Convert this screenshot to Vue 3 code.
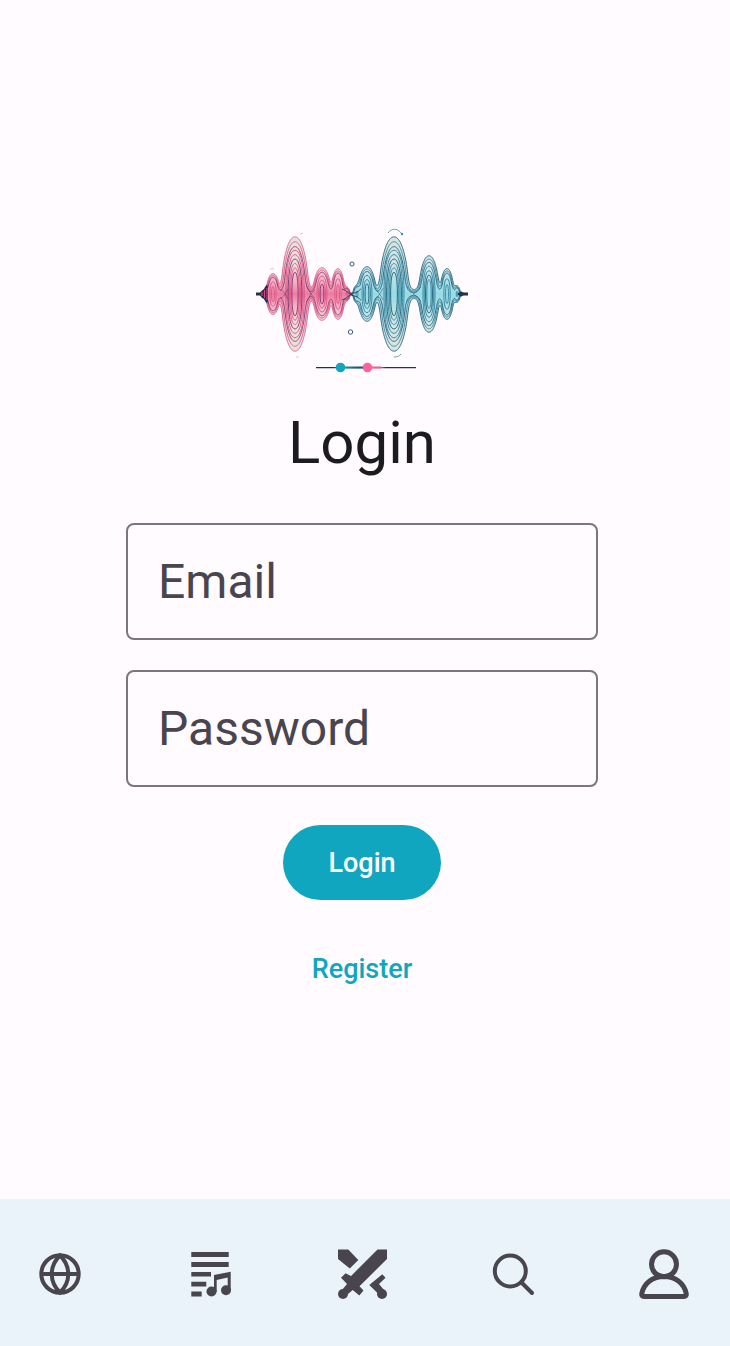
<script setup>
import { ref } from 'vue'

const email = ref('')
const password = ref('')

const MID = 101

// Each lobe: centre x, half width, half height, number of inner rings
const pinkLobes = [
  { x: 17, w: 6, h: 20, rings: 2 },
  { x: 39, w: 13, h: 57, rings: 6 },
  { x: 66, w: 8, h: 26, rings: 3 },
  { x: 82, w: 6, h: 25, rings: 2 },
  { x: 91, w: 3, h: 6, rings: 1 }
]
const tealLobes = [
  { x: 101, w: 4, h: 8, rings: 1 },
  { x: 111, w: 8, h: 27, rings: 3 },
  { x: 138, w: 14, h: 57, rings: 6 },
  { x: 173, w: 9, h: 38, rings: 4 },
  { x: 191, w: 6, h: 25, rings: 2 },
  { x: 201, w: 3, h: 7, rings: 1 }
]

function envelope(x, lobes, level, start, end) {
  const edge = Math.min(1, Math.max(0, Math.min(x - start, end - x) / 8))
  let sum = Math.pow((4 - level * 1.2) * edge, 2)
  for (const l of lobes) {
    const w = l.w * (1 - level * 0.1)
    const h = l.h * (1 - level * 0.085)
    const dx = Math.abs(x - l.x)
    const d = dx / w
    const body = d < 1 ? h * Math.pow(1 - Math.pow(d, 2.1), 0.55) : 0
    const flare = Math.min(h * 0.45, 18 - level * 2) * Math.exp(-Math.max(0, dx - w) / 2.4) * edge
    sum += Math.pow(body, 2) + Math.pow(flare, 2) * Math.min(1, d * d)
  }
  return Math.sqrt(sum)
}

function outline(lobes, level, start, end) {
  const top = []
  const bottom = []
  for (let x = start; x <= end; x += 0.25) {
    const y = envelope(x, lobes, level, start, end)
    top.push(`${x.toFixed(2)} ${(MID - y).toFixed(2)}`)
    bottom.unshift(`${x.toFixed(2)} ${(MID + y).toFixed(2)}`)
  }
  return `M${top.join('L')}L${bottom.join('L')}Z`
}

function rings(lobes) {
  const out = []
  for (const l of lobes) {
    for (let i = 1; i <= l.rings; i++) {
      const t = 0.25 + (0.75 * i) / l.rings
      const w = l.w * (1 - t * 0.76)
      const h = l.h * (1 - t * 0.62)
      out.push({
        dark: i % 3 === 0,
        d: `M${l.x - w} ${MID}C${l.x - w} ${MID - h * 0.6} ${l.x - w * 0.65} ${MID - h} ${l.x} ${MID - h}S${l.x + w} ${MID - h * 0.6} ${l.x + w} ${MID}S${l.x + w * 0.65} ${MID + h} ${l.x} ${MID + h}S${l.x - w} ${MID + h * 0.6} ${l.x - w} ${MID}Z`
      })
    }
  }
  return out
}

const waves = [
  {
    name: 'pink',
    fill: outline(pinkLobes, 0, 3, 97),
    lines: [0, 1, 2].map((n) => ({ dark: n === 2, d: outline(pinkLobes, n, 3, 97) })),
    rings: rings(pinkLobes)
  },
  {
    name: 'teal',
    fill: outline(tealLobes, 0, 94, 209),
    lines: [0, 1, 2].map((n) => ({ dark: n !== 1, d: outline(tealLobes, n, 94, 209) })),
    rings: rings(tealLobes)
  }
]
</script>

<template>
  <div class="screen">
    <main class="content">
      <svg class="logo" viewBox="0 0 212 212" role="img" aria-label="Sound wave logo">
        <defs>
          <linearGradient id="pinkFill" x1="0" y1="43" x2="0" y2="159" gradientUnits="userSpaceOnUse">
            <stop offset="0" stop-color="#e6e2dd" />
            <stop offset="0.25" stop-color="#eedcde" />
            <stop offset="0.4" stop-color="#f6aec5" />
            <stop offset="0.5" stop-color="#ee7ba2" />
            <stop offset="0.6" stop-color="#f6aec5" />
            <stop offset="0.75" stop-color="#eedcde" />
            <stop offset="1" stop-color="#e6e2dd" />
          </linearGradient>
          <linearGradient id="tealFill" x1="0" y1="43" x2="0" y2="159" gradientUnits="userSpaceOnUse">
            <stop offset="0" stop-color="#d8e4e0" />
            <stop offset="0.28" stop-color="#cde4e5" />
            <stop offset="0.5" stop-color="#98dbe5" />
            <stop offset="0.72" stop-color="#cde4e5" />
            <stop offset="1" stop-color="#d8e4e0" />
          </linearGradient>
          <linearGradient id="slider" x1="60" y1="0" x2="160" y2="0" gradientUnits="userSpaceOnUse">
            <stop offset="0" stop-color="#193252" />
            <stop offset="0.17" stop-color="#193252" />
            <stop offset="0.25" stop-color="#12a5bd" />
            <stop offset="0.4" stop-color="#17627c" />
            <stop offset="0.48" stop-color="#174e68" />
            <stop offset="0.54" stop-color="#ff5f99" />
            <stop offset="0.64" stop-color="#e65c8e" />
            <stop offset="0.7" stop-color="#302c4d" />
            <stop offset="1" stop-color="#302c4d" />
          </linearGradient>
        </defs>
        <g v-for="wave in waves" :key="wave.name" :class="wave.name">
          <path class="body" :d="wave.fill" />
          <path v-for="(line, i) in wave.lines" :key="'l' + i" class="line" :class="{ dark: line.dark }" :d="line.d" />
          <path v-for="(ring, i) in wave.rings" :key="'r' + i" class="line" :class="{ dark: ring.dark }" :d="ring.d" />
        </g>
        <path class="tip" d="M0 99.500H4L6 97.500L8 96L9 94L11 91.500L12 94V108L11 110.500L9 108L8 106L6 105L4 102.500H0Z" />
        <path class="tip-line" d="M6 99v4M8.500 97v8M11 95v12" />
        <path class="tip" d="M202 100L205 98.500L207 99.500H212V102.500H207L205 103.500L202 102Z" />
        <path class="knot" d="M86 96C91 97 93 102 98 103S103 106 105 107M86 107C91 106 93 101 98 100S103 97 105 96" />
        <path class="knot faint" d="M24 97c4 0 6 6 8 9M24 105c4 0 6-6 8-9M50 93c3 3 4 9 9 12M50 109c3-3 4-9 9-12M119 95c4 6 6 7 8 12M119 107c4-5 6-7 8-12M151 93c4 6 7 8 14 15M151 109c4-6 7-8 14-15" />
        <circle class="dot" cx="96" cy="71" r="2" />
        <circle class="dot" cx="94.500" cy="139" r="2.200" />
        <path class="spark teal-spark" d="M132 40c4-5 9-5 13 0M138 164c4 0 5-1 7-3" />
        <circle class="spark-dot" cx="146" cy="41" r="1.200" />
        <path class="spark pink-spark" d="M44 41l3-1M40 164h3M14 77c1-2 3-2 4-1" />
        <path d="M60 174h100v1.300H60Z" fill="url(#slider)" />
        <path d="M82 173.500h43v2H82Z" fill="url(#slider)" />
        <circle cx="84.500" cy="174.500" r="4.800" fill="#12a5bd" />
        <circle cx="111.500" cy="174.500" r="4.800" fill="#ff639d" />
      </svg>

      <h1 class="title">Login</h1>

      <form class="form" @submit.prevent>
        <input v-model="email" class="field" type="email" placeholder="Email" aria-label="Email" />
        <input v-model="password" class="field" type="password" placeholder="Password" aria-label="Password" />
        <button class="button primary" type="submit">Login</button>
        <button class="button text" type="button">Register</button>
      </form>
    </main>

    <nav class="nav">
      <a class="nav-item" href="#discover" aria-label="Discover">
        <svg class="icon" viewBox="0 0 50 50">
          <g class="stroke" stroke-width="4">
            <circle cx="25" cy="25" r="18.700" />
            <path d="M25 6.500C14 17 14 33 25 43.500C36 33 36 17 25 6.500ZM6 25H44" />
          </g>
        </svg>
      </a>
      <a class="nav-item" href="#playlists" aria-label="Playlists">
        <svg class="icon" viewBox="0 0 50 50">
          <path d="M5.300 3H42.700V8H5.300ZM5.300 13H42.700V18H5.300ZM5.300 23H25V27.500H5.300ZM5.300 32.800H20.300V37.500H5.300ZM5.300 42.500H15.700V47.500H5.300Z" />
          <path d="M28 26L44.700 22.700V41.500H41.700V28.500L30.700 31V43H28Z" />
          <circle cx="25.500" cy="42.500" r="5" />
          <circle cx="40" cy="41.300" r="5" />
        </svg>
      </a>
      <a class="nav-item" href="#battle" aria-label="Battle">
        <svg class="icon" viewBox="0 0 50 50">
          <path d="M1 .5H11.300L21.300 11L12.800 19.500L1 10Z" />
          <path d="M40.500 .5H50V10L22.500 37.300L26.500 41.500L22.300 46.500L15.700 41L11 45L5 41L10 35L4 28.700L8.500 24.300L14 27Z" />
          <path d="M45.300 25.300L48.500 28.700L42 35L47 41L41.500 45L32.300 36Z" />
          <circle cx="6" cy="45" r="5" />
          <circle cx="45" cy="45" r="5" />
        </svg>
      </a>
      <a class="nav-item" href="#search" aria-label="Search">
        <svg class="icon" viewBox="0 0 50 50">
          <g class="stroke" stroke-width="4" stroke-linecap="round">
            <circle cx="22.300" cy="22" r="15.500" />
            <path d="M33.500 33.500L44 44" />
          </g>
        </svg>
      </a>
      <a class="nav-item" href="#profile" aria-label="Profile">
        <svg class="icon" viewBox="0 0 50 50">
          <g class="stroke" stroke-width="5">
            <circle cx="25" cy="15.300" r="12.500" />
            <path d="M2.800 44.500C5 34 14 27.500 25 27.500S45 34 47.200 44.500Q47.600 47.500 45 47.500H5Q2.400 47.500 2.800 44.500Z" />
          </g>
        </svg>
      </a>
    </nav>
  </div>
</template>

<style>
body {
  background: #fffbff;
}
</style>

<style scoped>
.screen {
  display: flex;
  flex-direction: column;
  min-height: 100vh;
  background: #fffbff;
  color: #1c1b1f;
  font-family: Roboto, "Liberation Sans", sans-serif;
}

.content {
  flex: 1;
  display: flex;
  flex-direction: column;
  align-items: center;
  justify-content: center;
  padding: 0 30px 0 24px;
}

.logo {
  width: 212px;
  height: 212px;
}

.pink .body { fill: url(#pinkFill); }
.teal .body { fill: url(#tealFill); }
.line { fill: none; stroke-width: 0.9; }
.pink .line { stroke: #dc5683; }
.pink .line.dark { stroke: #7c3468; }
.teal .line { stroke: #2f839d; }
.teal .line.dark { stroke: #1b5676; }
.tip { fill: #23304f; }
.tip-line { stroke: #d94b7e; stroke-width: 1; }
.knot { fill: none; stroke: #263457; stroke-width: 0.9; }
.knot.faint { stroke-width: 0.7; opacity: 0.6; }
.dot { fill: none; stroke: #36587c; stroke-width: 1; }
.spark { fill: none; stroke-width: 0.9; }
.teal-spark { stroke: #5c98a8; }
.pink-spark { stroke: #f4b6c6; }
.spark-dot { fill: #2f91ab; }

.title {
  margin: 0 0 43px;
  font-size: 60px;
  line-height: 75px;
  font-weight: 400;
}

.form {
  display: flex;
  flex-direction: column;
  align-items: center;
  width: 100%;
  max-width: 472px;
}

.field {
  box-sizing: border-box;
  width: 100%;
  height: 117px;
  margin: 0 0 30px;
  padding: 0 30px;
  border: 2px solid #7b757f;
  border-radius: 8px;
  background: transparent;
  color: #1c1b1f;
  font-family: inherit;
  font-size: 48px;
}

.field::placeholder {
  color: #49454f;
  opacity: 1;
}

.button {
  height: 75px;
  padding: 0 45px;
  border: 0;
  border-radius: 38px;
  font-family: inherit;
  font-size: 27px;
  font-weight: 500;
  cursor: pointer;
}

.primary {
  margin: 8px 0 31px;
  background: #10a6c0;
  color: #ffffff;
}

.text {
  background: transparent;
  color: #10a6c0;
}

.nav {
  display: flex;
  justify-content: space-between;
  padding: 50px 41px 47px 35px;
  background: #eaf3fa;
}

.nav-item {
  display: block;
  color: #49454f;
}

.icon {
  display: block;
  width: 50px;
  height: 50px;
  fill: currentColor;
}

.stroke {
  fill: none;
  stroke: currentColor;
}
</style>
